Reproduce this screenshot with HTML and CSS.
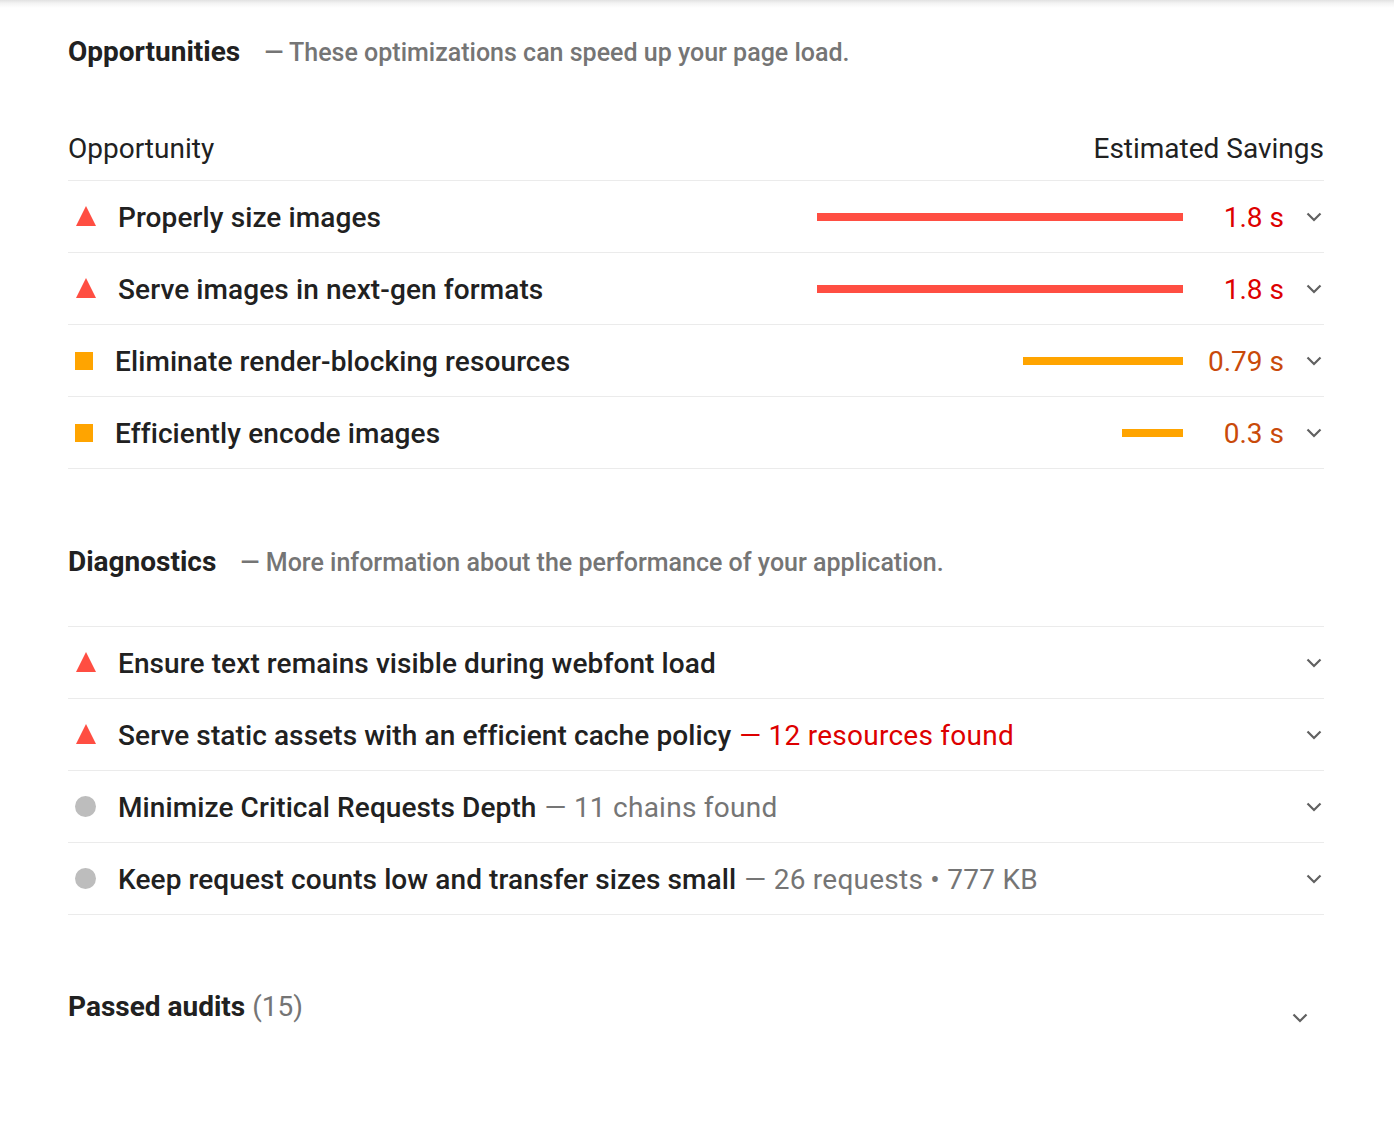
FILE: index.html
```html
<!DOCTYPE html>
<html lang="en">
<head>
<meta charset="utf-8">
<title>Opportunities</title>
<link rel="stylesheet" href="styles.css">
</head>
<body>
<div class="topshadow"></div>
<main class="report">
  <section class="group">
    <h2 class="group-title"><span class="title-main">Opportunities</span><span class="title-desc">— These optimizations can speed up your page load.</span></h2>
    <div class="table-head">
      <span>Opportunity</span>
      <span>Estimated Savings</span>
    </div>
    <ul class="audits">
      <li class="audit">
        <span class="icon tri"></span>
        <span class="audit-title">Properly size images</span>
        <span class="spark"><span class="bar fail" style="width:366px"></span></span>
        <span class="value fail-text">1.8 s</span>
        <svg class="chev" viewBox="0 0 16 10"><path d="M1.5 1.5 L8 8 L14.5 1.5" /></svg>
      </li>
      <li class="audit">
        <span class="icon tri"></span>
        <span class="audit-title">Serve images in next-gen formats</span>
        <span class="spark"><span class="bar fail" style="width:366px"></span></span>
        <span class="value fail-text">1.8 s</span>
        <svg class="chev" viewBox="0 0 16 10"><path d="M1.5 1.5 L8 8 L14.5 1.5" /></svg>
      </li>
      <li class="audit">
        <span class="icon sq"></span>
        <span class="audit-title">Eliminate render-blocking resources</span>
        <span class="spark"><span class="bar avg" style="width:160px"></span></span>
        <span class="value avg-text">0.79 s</span>
        <svg class="chev" viewBox="0 0 16 10"><path d="M1.5 1.5 L8 8 L14.5 1.5" /></svg>
      </li>
      <li class="audit">
        <span class="icon sq"></span>
        <span class="audit-title">Efficiently encode images</span>
        <span class="spark"><span class="bar avg" style="width:61px"></span></span>
        <span class="value avg-text">0.3 s</span>
        <svg class="chev" viewBox="0 0 16 10"><path d="M1.5 1.5 L8 8 L14.5 1.5" /></svg>
      </li>
    </ul>
  </section>

  <section class="group diag">
    <h2 class="group-title"><span class="title-main">Diagnostics</span><span class="title-desc">— More information about the performance of your application.</span></h2>
    <ul class="audits bordered">
      <li class="audit">
        <span class="icon tri"></span>
        <span class="audit-title">Ensure text remains visible during webfont load</span>
        <span class="fill"></span>
        <svg class="chev" viewBox="0 0 16 10"><path d="M1.5 1.5 L8 8 L14.5 1.5" /></svg>
      </li>
      <li class="audit">
        <span class="icon tri"></span>
        <span class="audit-title">Serve static assets with an efficient cache policy <span class="disp fail-text">— 12 resources found</span></span>
        <span class="fill"></span>
        <svg class="chev" viewBox="0 0 16 10"><path d="M1.5 1.5 L8 8 L14.5 1.5" /></svg>
      </li>
      <li class="audit">
        <span class="icon dot"></span>
        <span class="audit-title">Minimize Critical Requests Depth <span class="disp">— 11 chains found</span></span>
        <span class="fill"></span>
        <svg class="chev" viewBox="0 0 16 10"><path d="M1.5 1.5 L8 8 L14.5 1.5" /></svg>
      </li>
      <li class="audit">
        <span class="icon dot"></span>
        <span class="audit-title">Keep request counts low and transfer sizes small <span class="disp">— 26 requests • 777 KB</span></span>
        <span class="fill"></span>
        <svg class="chev" viewBox="0 0 16 10"><path d="M1.5 1.5 L8 8 L14.5 1.5" /></svg>
      </li>
    </ul>
  </section>

  <section class="passed">
    <h2 class="passed-title">Passed audits <span class="count">(15)</span></h2>
    <svg class="chev passed-chev" viewBox="0 0 16 10"><path d="M1.5 1.5 L8 8 L14.5 1.5" /></svg>
  </section>
</main>
</body>
</html>
```

FILE: styles.css
```css
* { box-sizing: border-box; }
html, body {
  margin: 0;
  padding: 0;
  background: #ffffff;
}
body {
  font-family: Roboto, "Liberation Sans", Arial, sans-serif;
  color: #212121;
  position: relative;
}
.topshadow {
  height: 8px;
  background: linear-gradient(to bottom, #e2e2e2 0%, #f3f3f3 40%, #ffffff 100%);
}
.report {
  width: 1256px;
  margin-left: 68px;
}
ul { list-style: none; margin: 0; padding: 0; }

.group-title {
  margin: 26px 0 0;
  height: 36px;
  line-height: 36px;
  font-size: 28px;
  font-weight: 400;
  display: flex;
  align-items: baseline;
  white-space: nowrap;
}
.title-main {
  font-weight: 700;
  color: #212121;
  margin-right: 24px;
}
.title-desc {
  color: #757575;
  font-weight: 500;
  font-size: 25px;
}
.table-head {
  margin-top: 46px;
  height: 65px;
  line-height: 66px;
  display: flex;
  justify-content: space-between;
  font-size: 28px;
  color: #212121;
  border-bottom: 1px solid #ebebeb;
}
.audit {
  height: 72px;
  border-bottom: 1px solid #ebebeb;
  display: flex;
  align-items: center;
  font-size: 28px;
}
.bordered { border-top: 1px solid #ebebeb; }
.icon { flex: none; display: block; }
.tri {
  width: 0;
  height: 0;
  margin-left: 8px;
  margin-right: 22px;
  border-left: 10px solid transparent;
  border-right: 10px solid transparent;
  border-bottom: 20px solid #ff4e42;
  margin-top: -2px;
}
.sq {
  width: 18px;
  height: 18px;
  background: #ffa400;
  margin-left: 7px;
  margin-right: 22px;
}
.dot {
  width: 21px;
  height: 21px;
  border-radius: 50%;
  background: #bdbdbd;
  margin-left: 7px;
  margin-right: 22px;
}
.audit-title {
  font-weight: 500;
  color: #212121;
  white-space: nowrap;
  letter-spacing: 0.1px;
  padding-top: 2px;
}
.disp {
  font-weight: 400;
  color: #757575;
  margin-left: 1px;
  letter-spacing: 0.25px;
}
.disp.fail-text { color: #dd0000; }
.spark {
  flex: 1;
  display: flex;
  justify-content: flex-end;
}
.bar {
  display: block;
  height: 8px;
}
.bar.fail { background: #ff4e42; }
.bar.avg { background: #ffa400; }
.value {
  width: 101px;
  text-align: right;
  font-weight: 400;
  flex: none;
  padding-top: 2px;
}
.fail-text { color: #dd0000; }
.avg-text { color: #c94a0a; }
.fill { flex: 1; }
.chev {
  width: 16px;
  height: 10px;
  flex: none;
  margin-left: 22px;
  margin-right: 2px;
  fill: none;
  stroke: #616161;
  stroke-width: 2.2;
}
.diag .group-title { margin-top: 75px; }
.diag .audits { margin-top: 46px; }

.passed {
  margin-top: 74px;
  display: flex;
  align-items: center;
  justify-content: space-between;
  height: 36px;
}
.passed-title {
  margin: 0;
  font-size: 28px;
  font-weight: 700;
  line-height: 36px;
  color: #212121;
}
.count {
  font-weight: 400;
  color: #757575;
}
.passed-chev {
  margin-right: 16px;
  margin-top: 22px;
}
```
